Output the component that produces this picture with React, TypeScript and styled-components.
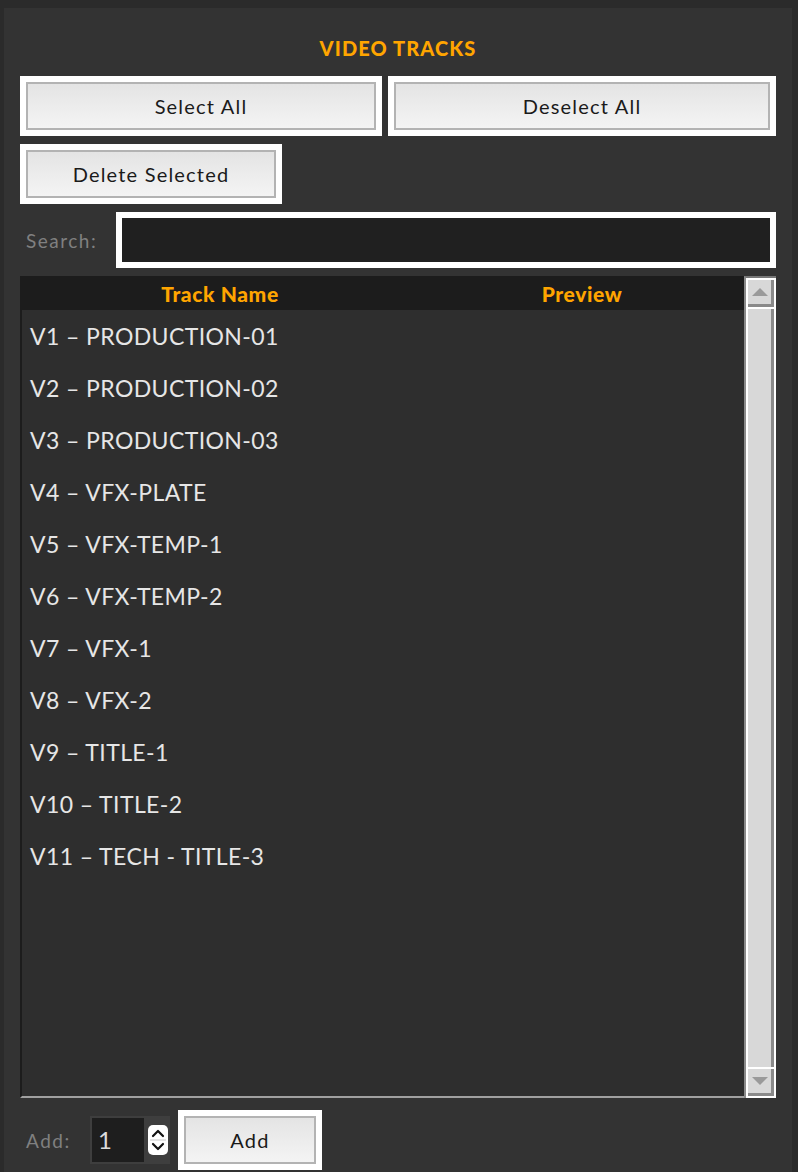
import React from 'react'
import styled, { createGlobalStyle } from 'styled-components'

const GlobalStyle = createGlobalStyle`
  html, body {
    margin: 0;
    padding: 0;
    background: #2b2b2b;
    font-family: Lato, "Open Sans", sans-serif;
  }
`

const Panel = styled.div`
  margin: 8px 6px 0 4px;
  padding: 0 16px;
  min-height: 1164px;
  background: #333333;
  box-sizing: border-box;
`

const Title = styled.div`
  padding-top: 28px;
  margin-bottom: 16px;
  height: 24px;
  line-height: 24px;
  text-align: center;
  color: #ffa500;
  font-weight: 900;
  font-size: 20px;
  letter-spacing: 1.1px;
`

const ButtonRow = styled.div`
  display: grid;
  grid-template-columns: 362px 1fr;
  gap: 6px;
`

const Frame = styled.div<{ $width?: number }>`
  background: #ffffff;
  padding: 6px;
  width: ${p => (p.$width ? `${p.$width}px` : 'auto')};
  box-sizing: border-box;
`

const Button = styled.button`
  display: block;
  width: 100%;
  height: 48px;
  border: 2px solid #b3b3b3;
  background: linear-gradient(#e4e4e4, #f4f4f4);
  color: #1a1a1a;
  font-family: Lato, "Open Sans", sans-serif;
  font-size: 20px;
  letter-spacing: 1.2px;
  padding: 0;
  cursor: pointer;
`

const Spaced = styled.div`
  margin-top: 8px;
  display: flex;
  align-items: center;
`

const Label = styled.span<{ $width: number }>`
  width: ${p => p.$width}px;
  padding-left: 6px;
  box-sizing: border-box;
  color: #808080;
  font-size: 19px;
  letter-spacing: 1.5px;
`

const SearchFrame = styled.div`
  flex: 1;
  background: #ffffff;
  padding: 6px;
`

const SearchInput = styled.input`
  display: block;
  width: 100%;
  height: 44px;
  box-sizing: border-box;
  border: none;
  background: #202020;
  color: #ddd;
  font-size: 18px;
  outline: none;
`

const List = styled.div`
  margin-top: 8px;
  height: 822px;
  display: flex;
`

const ListBody = styled.div`
  flex: 1;
  display: flex;
  flex-direction: column;
  background: #2e2e2e;
  border-left: 2px solid #1c1c1c;
  border-bottom: 2px solid #a0a0a0;
`

const Header = styled.div`
  display: grid;
  grid-template-columns: 400px 1fr;
  height: 34px;
  margin-left: -2px;
  background: #1c1c1c;
  color: #ffa500;
  font-weight: 900;
  font-size: 21px;
  align-items: center;
  text-align: center;
  letter-spacing: 0.6px;
`

const Row = styled.div`
  height: 52px;
  line-height: 52px;
  padding-left: 8px;
  color: #e6e6e6;
  font-size: 23px;
  letter-spacing: 0.4px;
`

const ScrollBar = styled.div`
  width: 32px;
  display: flex;
  flex-direction: column;
  border-left: 2px solid #8a8a8a;
  border-top: 2px solid #777;
  background: #ffffff;
  box-sizing: border-box;
  padding: 2px;
  gap: 2px;
`

const ScrollButton = styled.div`
  height: 24px;
  background: #d8d8d8;
  border-right: 3px solid #8a8a8a;
  border-bottom: 3px solid #8a8a8a;
  display: flex;
  align-items: center;
  justify-content: center;
`

const Track = styled.div`
  flex: 1;
  background: #d8d8d8;
  border-right: 3px solid #8a8a8a;
`

const AddRow = styled.div`
  margin-top: 12px;
  height: 60px;
  display: flex;
  align-items: center;
`

const NumberBox = styled.div`
  width: 80px;
  height: 48px;
  box-sizing: border-box;
  padding: 2px;
  background: #3e3e3e;
  display: flex;
  align-items: center;
  gap: 4px;
  margin-right: 8px;
`

const NumberValue = styled.div`
  width: 52px;
  height: 44px;
  background: #1e1e1e;
  color: #dcdcdc;
  font-size: 24px;
  line-height: 44px;
  padding-left: 6px;
  box-sizing: border-box;
`

const Spinner = styled.div`
  width: 20px;
  height: 30px;
  background: #ffffff;
  border-radius: 5px;
`

const tracks = [
  'V1 – PRODUCTION-01',
  'V2 – PRODUCTION-02',
  'V3 – PRODUCTION-03',
  'V4 – VFX-PLATE',
  'V5 – VFX-TEMP-1',
  'V6 – VFX-TEMP-2',
  'V7 – VFX-1',
  'V8 – VFX-2',
  'V9 – TITLE-1',
  'V10 – TITLE-2',
  'V11 – TECH - TITLE-3'
]

const Arrow = ({ down }: { down?: boolean }) => (
  <svg width="18" height="10" viewBox="0 0 18 10">
    <polygon points={down ? '1,1 17,1 9,9' : '1,9 17,9 9,1'} fill="#9a9a9a" />
  </svg>
)

const SpinIcon = () => (
  <svg width="20" height="30" viewBox="0 0 20 30">
    <path d="M5 11 L10 6 L15 11" stroke="#111" strokeWidth="2.2" fill="none" strokeLinecap="round" strokeLinejoin="round" />
    <line x1="2" y1="15" x2="18" y2="15" stroke="#c8c8c8" strokeWidth="1" />
    <path d="M5 19 L10 24 L15 19" stroke="#111" strokeWidth="2.2" fill="none" strokeLinecap="round" strokeLinejoin="round" />
  </svg>
)

export default function App() {
  return (
    <>
      <GlobalStyle />
      <Panel>
        <Title>VIDEO TRACKS</Title>
        <ButtonRow>
          <Frame>
            <Button>Select All</Button>
          </Frame>
          <Frame>
            <Button>Deselect All</Button>
          </Frame>
        </ButtonRow>
        <Spaced>
          <Frame $width={262}>
            <Button>Delete Selected</Button>
          </Frame>
        </Spaced>
        <Spaced>
          <Label $width={96}>Search:</Label>
          <SearchFrame>
            <SearchInput />
          </SearchFrame>
        </Spaced>
        <List>
          <ListBody>
            <Header>
              <span>Track Name</span>
              <span>Preview</span>
            </Header>
            {tracks.map(t => (
              <Row key={t}>{t}</Row>
            ))}
          </ListBody>
          <ScrollBar>
            <ScrollButton>
              <Arrow />
            </ScrollButton>
            <Track />
            <ScrollButton>
              <Arrow down />
            </ScrollButton>
          </ScrollBar>
        </List>
        <AddRow>
          <Label $width={70}>Add:</Label>
          <NumberBox>
            <NumberValue>1</NumberValue>
            <Spinner>
              <SpinIcon />
            </Spinner>
          </NumberBox>
          <Frame $width={144}>
            <Button>Add</Button>
          </Frame>
        </AddRow>
      </Panel>
    </>
  )
}
